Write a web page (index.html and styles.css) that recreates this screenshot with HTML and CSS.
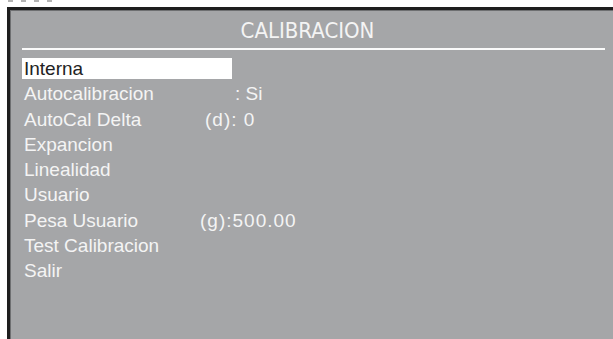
FILE: index.html
```html
<!DOCTYPE html>
<html lang="es">
<head>
  <meta charset="UTF-8" />
  <meta name="viewport" content="width=device-width, initial-scale=1.0"/>
  <title>Calibracion</title>
  <link rel="stylesheet" href="styles.css">
</head>
<body>
  <div class="crop">
    <span></span><span></span><span></span><span></span>
  </div>
  <div class="screen">
    <h1 class="title">CALIBRACION</h1>
    <div class="rule"></div>
    <ul class="menu">
      <li class="row selected"><span class="label">Interna</span></li>
      <li class="row"><span class="label">Autocalibracion</span><span class="value v-si">: Si</span></li>
      <li class="row"><span class="label">AutoCal Delta</span><span class="value num v-d">(d): 0</span></li>
      <li class="row"><span class="label">Expancion</span></li>
      <li class="row"><span class="label">Linealidad</span></li>
      <li class="row"><span class="label">Usuario</span></li>
      <li class="row"><span class="label">Pesa Usuario</span><span class="value num">(g):500.00</span></li>
      <li class="row"><span class="label">Test Calibracion</span></li>
      <li class="row"><span class="label">Salir</span></li>
    </ul>
  </div>
</body>
</html>
```

FILE: styles.css
```css
body {
  margin: 0;
  background: #fff;
  overflow: hidden;
  font-family: "Liberation Sans", Arial, sans-serif;
}
.crop {
  display: flex;
  gap: 8px;
  height: 3px;
  padding-left: 8px;
}
.crop span {
  width: 5px;
  height: 2px;
  background: #b4b4b4;
}
.screen {
  margin: 4px 0 0 7px;
  width: 607px;
  height: 340px;
  border: 3px solid #1e1e1e;
  border-right: none;
  border-bottom: none;
  background: #a5a6a8;
  box-shadow: inset 1px 1px 0 #6e6f71;
  color: #f4f4f4;
}
.title {
  margin: 0;
  padding: 6px 12px 0 0;
  font-family: "Liberation Sans Narrow", "DejaVu Sans Condensed", "Liberation Sans", sans-serif;
  font-size: 22px;
  font-weight: normal;
  line-height: 30px;
  text-align: center;
}
.rule {
  height: 2px;
  margin: 2px 12px 0;
  background: #fafafa;
}
.menu {
  list-style: none;
  margin: 0;
  padding: 6px 0 0 12px;
}
.row {
  display: flex;
  align-items: center;
  height: 25.25px;
  font-size: 19px;
}
.row span {
  line-height: 21px;
}
.label {
  width: 178px;
  padding-left: 2px;
  box-sizing: border-box;
}
.selected .label {
  width: 210px;
  background: #fff;
  color: #222;
}
.num {
  letter-spacing: 1px;
}
.v-si {
  margin-left: 35px;
}
.v-d {
  margin-left: 5px;
}
```
